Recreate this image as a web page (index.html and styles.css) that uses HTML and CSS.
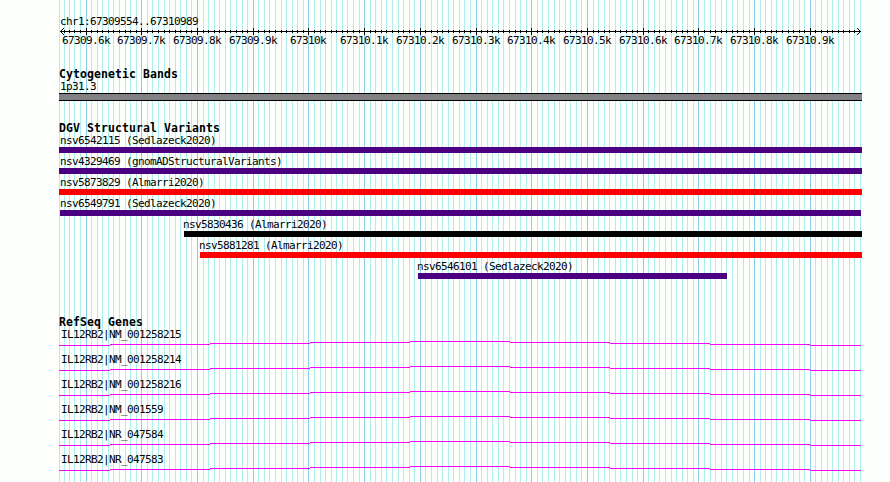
FILE: index.html
```
<!DOCTYPE html>
<html lang="en">
<head>
    <meta charset="UTF-8">
    <title>chr1:67309554..67310989</title>
    <link rel="stylesheet" href="styles.css">
</head>
<body>
    <svg id="grid" class="grid" width="890" height="482"></svg>
    <main class="browser">
        <header class="ruler">
            <div class="label">chr1:67309554..67310989</div>
            <svg id="axis" class="axis" width="831" height="21"></svg>
        </header>

        <section class="track cytoband">
            <h2>Cytogenetic Bands</h2>
            <div class="label">1p31.3</div>
            <div class="band"></div>
        </section>

        <section class="track variants">
            <h2>DGV Structural Variants</h2>
            <div class="variant gain"><div class="label">nsv6542115 (Sedlazeck2020)</div><div class="bar"></div></div>
            <div class="variant gain"><div class="label">nsv4329469 (gnomADStructuralVariants)</div><div class="bar"></div></div>
            <div class="variant loss"><div class="label">nsv5873829 (Almarri2020)</div><div class="bar"></div></div>
            <div class="variant gain inner"><div class="label">nsv6549791 (Sedlazeck2020)</div><div class="bar"></div></div>
            <div class="variant complex"><div class="label">nsv5830436 (Almarri2020)</div><div class="bar"></div></div>
            <div class="variant loss late"><div class="label">nsv5881281 (Almarri2020)</div><div class="bar"></div></div>
            <div class="variant gain short"><div class="label">nsv6546101 (Sedlazeck2020)</div><div class="bar"></div></div>
        </section>

        <section class="track genes">
            <h2>RefSeq Genes</h2>
            <div class="gene"><div class="label">IL12RB2|NM_001258215</div></div>
            <div class="gene"><div class="label">IL12RB2|NM_001258214</div></div>
            <div class="gene"><div class="label">IL12RB2|NM_001258216</div></div>
            <div class="gene"><div class="label">IL12RB2|NM_001559</div></div>
            <div class="gene"><div class="label">IL12RB2|NR_047584</div></div>
            <div class="gene"><div class="label">IL12RB2|NR_047583</div></div>
        </section>
    </main>
    <script src="script.js"></script>
</body>
</html>
```
FILE: styles.css
```
* {
    box-sizing: border-box;
}
body {
    margin: 0;
    height: 482px;
    overflow: hidden;
    background: #fdfffc;
    color: #000;
    font: 11px/12px 'DejaVu Sans Mono', monospace;
}
.grid {
    position: absolute;
    top: 0;
    left: 0;
    z-index: -1;
}
.grid rect {
    fill: #afeeee;
}
.grid .major {
    fill: #87ceeb;
}
.browser {
    width: 890px;
    padding: 15px 0 0 59px;
}
.label {
    height: 12px;
    padding-left: 1px;
    letter-spacing: -0.622px;
    white-space: pre;
}
h2 {
    margin: 0;
    height: 13px;
    font-size: 11.5px;
    line-height: 13px;
    font-weight: bold;
    letter-spacing: 0.077px;
    white-space: pre;
}
.ruler {
    height: 53px;
}
.ruler .label {
    line-height: 14px;
}
.axis {
    display: block;
}
.axis text {
    font-size: 11px;
    letter-spacing: -0.622px;
}
.band {
    width: 803px;
    height: 8px;
    background: #838083;
    border: solid #000;
    border-width: 1px 0;
}
.cytoband {
    height: 54px;
}
.variants {
    height: 194px;
}
.variants h2,
.genes h2 {
    height: 12px;
}
.variant {
    width: 803px;
    height: 21px;
}
.variant .label {
    height: 13px;
    line-height: 14px;
}
.bar {
    height: 6px;
    background: #4b0082;
}
.loss .bar {
    background: #f00;
}
.inner {
    width: 802px;
    padding-left: 1px;
}
.inner .label {
    padding-left: 0;
}
.complex {
    padding-left: 125px;
}
.complex .bar {
    background: #000;
}
.late {
    padding-left: 141px;
}
.short {
    width: 668px;
    padding-left: 359px;
}
.complex .label,
.late .label,
.short .label {
    padding-left: 0;
    margin-left: -1px;
}
.gene {
    height: 25px;
}
.gene .label {
    padding-left: 2px;
    line-height: 14px;
}
.intron {
    display: block;
    fill: #f0f;
}
```
FILE: script.js
```
const start = 67309554;
const scale = 800 / 1436;
const toX = (pos) => Math.round(60 + (pos - start) * scale);

function rect(x, y, w, h, cls) {
    return `<rect x="${x}" y="${y}" width="${w}" height="${h}"${cls ? ` class="${cls}"` : ''}/>`;
}

let grid = rect(59, 0, 1, 482);
let axis = rect(1, 4, 801, 1);
for (let pos = 67309560; pos <= 67310990; pos += 10) {
    const major = pos % 100 === 0;
    const x = pos === 67309560 ? 64 : toX(pos);
    grid += rect(x, 0, 1, 482, major ? 'major' : '');
    if (pos < 67310990) {
        axis += major ? rect(x - 59, 1, 1, 7) : rect(x - 59, 3, 1, 3);
    }
    if (major) {
        const text = pos / 1000 + 'k';
        axis += `<text x="${x - 59 - text.length * 3}" y="17">${text}</text>`;
    }
}
// arrow heads
for (let i = 1; i <= 3; i++) {
    axis += rect(1 + i, 4 - i, 1, 1) + rect(1 + i, 4 + i, 1, 1);
    axis += rect(801 - i, 4 - i, 1, 1) + rect(801 - i, 4 + i, 1, 1);
}
document.getElementById('grid').innerHTML = grid;
document.getElementById('axis').innerHTML = axis;

// [left, right, y] of each intron step
const steps = [
    [0, 51, 5], [51, 151, 4], [151, 251, 3], [251, 351, 2], [351, 451, 1],
    [451, 551, 2], [551, 651, 3], [651, 751, 4], [751, 802, 5]
];
document.querySelectorAll('.gene').forEach((gene) => {
    const lines = steps.map(([a, b, y]) => rect(a, y, b - a, 1)).join('');
    gene.insertAdjacentHTML('beforeend', `<svg class="intron" width="802" height="7">${lines}</svg>`);
});
```
